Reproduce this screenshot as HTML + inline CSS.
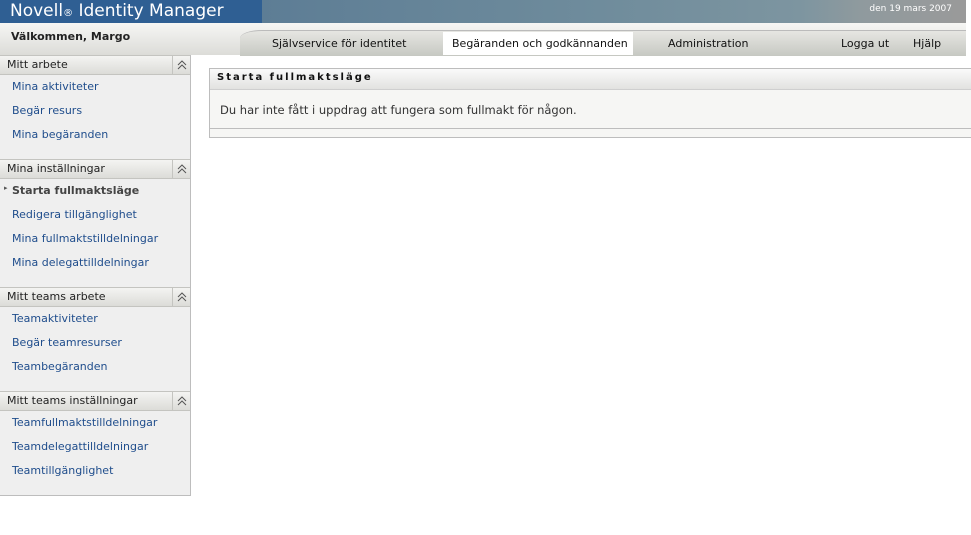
<!DOCTYPE html><html><head><meta charset="utf-8"><style>
body{margin:0;width:971px;height:535px;overflow:hidden;background:#fff;font-family:"DejaVu Sans","Liberation Sans",sans-serif;font-size:11px;position:relative}
.a{position:absolute}
.sh{position:absolute;left:0;width:190px;height:18px;background:linear-gradient(#f4f4f2,#dcdcd8);border-top:1px solid #c4c4c0;border-bottom:1px solid #c4c4c0;color:#222;font-size:11px;line-height:18px;text-indent:7px}
.sh i{position:absolute;right:0;top:0;width:17px;height:18px;border-left:1px solid #c4c4c0}
.sh svg{position:absolute;left:4px;top:3px}
.it{position:absolute;left:12px;color:#1f4d8c;font-size:11px}
</style></head><body>
<div class="a" style="left:0;top:0;width:966px;height:23px;background:linear-gradient(90deg,#2f5f93 0,#2f5f93 262px,#5d7d95 262px,#6f8c9c 600px,#7d95a0 800px,#8f9a9e 860px,#9a9a9a 966px)"></div>
<div class="a" style="left:10px;top:0;color:#fff;font-size:17px;line-height:23px">Novell<span style="font-size:10px">®</span> Identity Manager</div>
<div class="a" style="right:19px;top:4px;color:#fff;font-size:9px">den 19 mars 2007</div>
<div class="a" style="left:0;top:23px;width:966px;height:32px;background:linear-gradient(#f6f6f4,#dcdcd8)"></div>
<div class="a" style="left:240px;top:30px;width:726px;height:25px;background:linear-gradient(#e6e6e2,#c6c8c2);border-top:1px solid #bbb;border-top-left-radius:22px 8px"></div>
<div class="a" style="left:11px;top:30px;font-weight:bold;color:#222;font-size:11px">Välkommen, Margo</div>
<div class="a" style="left:443px;top:32px;width:190px;height:23px;background:#fff"></div>
<div class="a" style="left:272px;top:37px;color:#111">Självservice för identitet</div>
<div class="a" style="left:452px;top:37px;color:#111">Begäranden och godkännanden</div>
<div class="a" style="left:668px;top:37px;color:#111">Administration</div>
<div class="a" style="left:841px;top:37px;color:#111">Logga ut</div>
<div class="a" style="left:913px;top:37px;color:#111">Hjälp</div>
<div class="a" style="left:0;top:55px;width:190px;height:440px;background:#efefef;border-right:1px solid #bdbdbd;border-bottom:1px solid #bdbdbd"></div>
<div class="sh" style="top:55px">Mitt arbete<i><svg width="10" height="12"><path d="M1 6L5 2L9 6M1 10L5 6L9 10" fill="none" stroke="#555" stroke-width="1"/></svg></i></div>
<div class="it" style="top:80px">Mina aktiviteter</div>
<div class="it" style="top:104px">Begär resurs</div>
<div class="it" style="top:128px">Mina begäranden</div>
<div class="sh" style="top:159px">Mina inställningar<i><svg width="10" height="12"><path d="M1 6L5 2L9 6M1 10L5 6L9 10" fill="none" stroke="#555" stroke-width="1"/></svg></i></div>
<div class="a" style="left:4px;top:184px;color:#555;font-size:7px">▸</div>
<div class="it" style="top:184px;color:#444;font-weight:bold">Starta fullmaktsläge</div>
<div class="it" style="top:208px">Redigera tillgänglighet</div>
<div class="it" style="top:232px">Mina fullmaktstilldelningar</div>
<div class="it" style="top:256px">Mina delegattilldelningar</div>
<div class="sh" style="top:287px">Mitt teams arbete<i><svg width="10" height="12"><path d="M1 6L5 2L9 6M1 10L5 6L9 10" fill="none" stroke="#555" stroke-width="1"/></svg></i></div>
<div class="it" style="top:312px">Teamaktiviteter</div>
<div class="it" style="top:336px">Begär teamresurser</div>
<div class="it" style="top:360px">Teambegäranden</div>
<div class="sh" style="top:391px">Mitt teams inställningar<i><svg width="10" height="12"><path d="M1 6L5 2L9 6M1 10L5 6L9 10" fill="none" stroke="#555" stroke-width="1"/></svg></i></div>
<div class="it" style="top:416px">Teamfullmaktstilldelningar</div>
<div class="it" style="top:440px">Teamdelegattilldelningar</div>
<div class="it" style="top:464px">Teamtillgänglighet</div>
<div class="a" style="left:209px;top:68px;width:770px;height:68px;border:1px solid #bdbdbd;background:#f6f6f4"></div>
<div class="a" style="left:210px;top:69px;width:770px;height:20px;background:linear-gradient(#fafafa,#e2e2e0);border-bottom:1px solid #cfcfcf"></div>
<div class="a" style="left:217px;top:72px;font-weight:bold;letter-spacing:2px;font-size:10px;color:#111">Starta fullmaktsläge</div>
<div class="a" style="left:220px;top:103px;color:#333;font-size:11.5px">Du har inte fått i uppdrag att fungera som fullmakt för någon.</div>
<div class="a" style="left:210px;top:128px;width:770px;height:1px;background:#bdbdbd"></div>
</body></html>
